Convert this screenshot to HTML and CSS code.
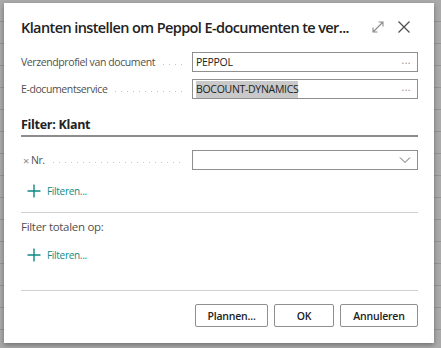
FILE: index.html
```html
<!DOCTYPE html>
<html lang="nl">

<head>
    <meta charset="utf-8">
    <meta name="viewport" content="width=device-width, initial-scale=1.0">
    <title>Klanten instellen om Peppol E-documenten te verzenden</title>
    <link rel="stylesheet" href="styles.css">
</head>

<body>

    <div class="dialoog">
        <header class="kop">
            <h1>Klanten instellen om Peppol E-documenten te ver...</h1>
            <svg class="ikoon" width="14" height="14" viewBox="0 0 14 14">
                <path d="M2 12 L12 2 M7.5 2 H12 V6.5 M2 7.5 V12 H6.5" fill="none" stroke="#8a8a8a" stroke-width="1.1"/>
            </svg>
            <svg class="ikoon sluit" width="14" height="14" viewBox="0 0 14 14">
                <path d="M1.5 1.5 L12.5 12.5 M12.5 1.5 L1.5 12.5" fill="none" stroke="#505050" stroke-width="1.3"/>
            </svg>
        </header>

        <div class="velden">
            <div class="rij">
                <span class="label">Verzendprofiel van document</span>
                <div class="invoer"><span>PEPPOL</span><span class="meer">...</span></div>
            </div>
            <div class="rij">
                <span class="label">E-documentservice</span>
                <div class="invoer"><span class="markeer">BOCOUNT-DYNAMICS</span><span class="meer">...</span></div>
            </div>
        </div>

        <h2>Filter: Klant</h2>

        <div class="rij nr">
            <span class="label"><span class="kruis">×</span>Nr.</span>
            <div class="invoer">
                <span></span>
                <svg width="12" height="8" viewBox="0 0 12 8">
                    <path d="M1 1.5 L6 6.5 L11 1.5" fill="none" stroke="#666" stroke-width="1"/>
                </svg>
            </div>
        </div>

        <a class="filteren een">
            <svg width="14" height="14" viewBox="0 0 14 14">
                <path d="M7 0.5 V13.5 M0.5 7 H13.5" fill="none" stroke="#0e8a85" stroke-width="1.4"/>
            </svg>
            Filteren...
        </a>

        <hr>

        <p class="totalen">Filter totalen op:</p>

        <a class="filteren twee">
            <svg width="14" height="14" viewBox="0 0 14 14">
                <path d="M7 0.5 V13.5 M0.5 7 H13.5" fill="none" stroke="#0e8a85" stroke-width="1.4"/>
            </svg>
            Filteren...
        </a>

        <hr class="onder">

        <footer class="knoppen">
            <button class="plannen">Plannen...</button>
            <button class="ok">OK</button>
            <button class="annuleren">Annuleren</button>
        </footer>
    </div>

</body></html>
```

FILE: styles.css
```css
body {
    margin: 0;
    height: 348px;
    overflow: hidden;
    background-color: #aaaaaa;
    background-image: repeating-linear-gradient(to bottom, transparent 0, transparent 21px, #959595 21px, #959595 22px);
    font-family: "Open Sans", "Noto Sans", sans-serif;
    color: #333;
}

.dialoog {
    margin: 3px 0 0 4px;
    width: 430px;
    height: 340px;
    box-sizing: border-box;
    padding: 0 16px 0 17px;
    background-color: #fff;
    box-shadow: 0 2px 5px rgba(0, 0, 0, 0.35);
}

.kop {
    display: flex;
    align-items: center;
    padding-top: 13px;
    height: 22px;
}

h1 {
    margin: 0;
    flex: 1;
    min-width: 0;
    overflow: hidden;
    font-size: 14.5px;
    font-weight: 600;
    color: #222;
    letter-spacing: -0.6px;
    white-space: nowrap;
}

.ikoon {
    flex: none;
    margin-left: 10px;
}

.sluit {
    margin-left: 12px;
    margin-right: 7px;
}

.velden {
    margin-top: 14px;
    display: flex;
    flex-direction: column;
    gap: 7px;
}

.rij {
    display: flex;
    align-items: center;
    height: 20px;
}

.label {
    width: 162px;
    margin-right: 9px;
    display: flex;
    align-items: center;
    font-size: 10.5px;
    letter-spacing: -0.4px;
    color: #505050;
    white-space: nowrap;
}

.label::after {
    content: "";
    flex: 1;
    height: 1px;
    margin: 4px 0 0 8px;
    background-image: linear-gradient(to right, #c4c4c4 1px, transparent 1px);
    background-size: 6px 1px;
}

.invoer {
    flex: 1;
    height: 20px;
    box-sizing: border-box;
    border: 1px solid #8f8f8f;
    display: flex;
    align-items: center;
    justify-content: space-between;
    padding: 0 6px 0 3px;
    font-size: 10.5px;
    letter-spacing: -0.3px;
    color: #222;
}

.markeer {
    background-color: #c9c9c9;
    line-height: 17px;
}

.meer {
    color: #888;
    font-size: 10px;
    letter-spacing: 0.5px;
    line-height: 10px;
    padding-bottom: 4px;
}

h2 {
    margin: 16px 0 0;
    height: 20px;
    line-height: 20px;
    border-bottom: 2px solid #8c8c8c;
    font-size: 12.5px;
    font-weight: 700;
    letter-spacing: -0.3px;
    color: #222;
}

.nr {
    margin-top: 13px;
}

.kruis {
    color: #888;
    font-size: 11px;
    margin: 0 2px 0 2px;
}

.filteren {
    display: flex;
    align-items: center;
    height: 20px;
    padding-left: 6px;
    gap: 6px;
    font-size: 10px;
    letter-spacing: -0.3px;
    color: #0e8a85;
}

.een {
    margin-top: 11px;
}

.twee {
    margin-top: 8px;
}

hr {
    margin: 11px 0 0;
    border: none;
    border-top: 1px solid #d0d0d0;
}

.totalen {
    margin: 4px 0 0;
    height: 20px;
    line-height: 20px;
    font-size: 11.5px;
    letter-spacing: -0.3px;
    color: #505050;
}

hr.onder {
    margin-top: 25px;
}

.knoppen {
    margin-top: 13px;
    display: flex;
    justify-content: flex-end;
    gap: 6px;
}

button {
    height: 23px;
    box-sizing: border-box;
    border: 1px solid #8f8f8f;
    border-radius: 2px;
    background-color: #fff;
    font-family: inherit;
    font-size: 10.5px;
    font-weight: 600;
    letter-spacing: -0.2px;
    color: #222;
}

.plannen {
    width: 73px;
}

.ok {
    width: 60px;
}

.annuleren {
    width: 78px;
}
```
